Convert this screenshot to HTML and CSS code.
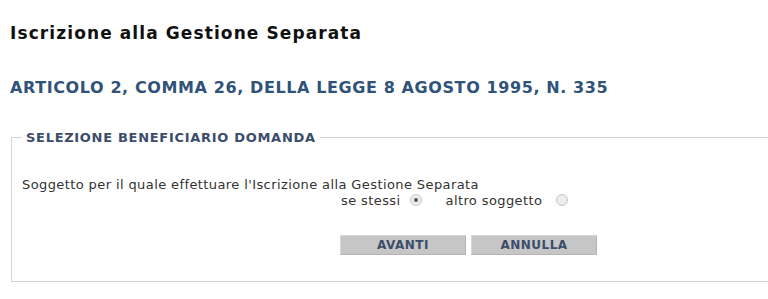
FILE: index.html
```html
<!DOCTYPE html>
<html lang="it">
<head>
<meta charset="utf-8">
<title>Iscrizione alla Gestione Separata</title>
<link rel="stylesheet" href="styles.css">
</head>
<body>
<div class="page">
  <h1 class="title">Iscrizione alla Gestione Separata</h1>
  <h2 class="subtitle">ARTICOLO 2, COMMA 26, DELLA LEGGE 8 AGOSTO 1995, N. 335</h2>
  <fieldset class="box">
    <legend class="legend">SELEZIONE BENEFICIARIO DOMANDA</legend>
    <p class="question">Soggetto per il quale effettuare l'Iscrizione alla Gestione Separata</p>
    <div class="choices">
      <label class="choice">se stessi <span class="radio checked"></span></label>
      <label class="choice choice-wide">altro soggetto <span class="radio"></span></label>
    </div>
    <div class="buttons">
      <button class="btn" type="button">AVANTI</button>
      <button class="btn" type="button">ANNULLA</button>
    </div>
  </fieldset>
</div>
</body>
</html>
```
FILE: styles.css
```css
html, body {
  margin: 0;
  padding: 0;
  background: #ffffff;
  overflow: hidden;
}
body {
  font-family: "DejaVu Sans", Verdana, sans-serif;
  color: #222222;
}
.page {
  width: 920px;
  padding: 22px 0 0 10px;
}
.title {
  margin: 0;
  font-size: 17px;
  letter-spacing: 1.1px;
  font-weight: bold;
  color: #111111;
  line-height: 22px;
}
.subtitle {
  margin: 34px 0 0 0;
  font-size: 16px;
  letter-spacing: 0.6px;
  font-weight: bold;
  color: #2f5379;
  line-height: 20px;
}
.box {
  margin: 32px 0 0 1px;
  padding: 0 0 26px 10px;
  border: 1px solid #d4d4d4;
  border-right: none;
  min-width: 0;
}
.legend {
  padding: 0 4px;
  margin-left: 0;
  font-size: 13px;
  font-weight: bold;
  color: #3b4d6b;
  letter-spacing: 0.7px;
}
.question {
  margin: 31px 0 0 0;
  font-size: 13px;
  letter-spacing: 0.4px;
  line-height: 18px;
  color: #333333;
}
.choices {
  display: flex;
  gap: 24px;
  padding-left: 319px;
  margin-top: -2px;
  font-size: 13px;
  letter-spacing: 0.4px;
  line-height: 18px;
  color: #333333;
}
.choice {
  display: flex;
  align-items: center;
  gap: 9px;
}
.choice-wide {
  gap: 14px;
}
.radio {
  display: inline-block;
  width: 12px;
  height: 12px;
  border-radius: 50%;
  border: 1px solid #c6c6c6;
  background: #ededed;
  box-sizing: border-box;
  position: relative;
  margin-top: -3px;
}
.radio.checked::after {
  content: "";
  position: absolute;
  left: 3px;
  top: 3px;
  width: 4px;
  height: 4px;
  border-radius: 50%;
  background: #555555;
}
.buttons {
  display: flex;
  gap: 5px;
  padding-left: 318px;
  margin-top: 25px;
}
.btn {
  width: 126px;
  height: 20px;
  padding: 0;
  font-family: "DejaVu Sans", Verdana, sans-serif;
  font-size: 12px;
  letter-spacing: 0.5px;
  font-weight: bold;
  color: #3b4d6b;
  background: #c6c6c6;
  border: 1px solid #b4b4b4;
  border-top-color: #d8d8d8;
  border-left-color: #d8d8d8;
}
```
